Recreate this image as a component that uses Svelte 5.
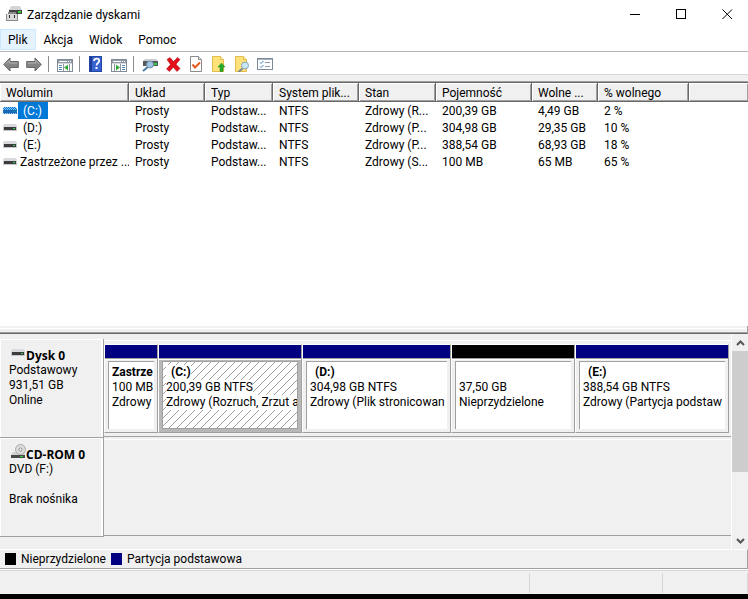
<script>
  // Disk management console: volume list on top, graphical disk map below.

  const menus = ["Plik", "Akcja", "Widok", "Pomoc"];
  let activeMenu = $state("Plik");

  // null is a separator
  const tools = [
    ["back", "Wstecz"], ["forward", "Dalej"], null,
    ["tree", "Pokaż drzewo konsoli"], null,
    ["help", "Pomoc"], ["pane", "Pokaż okienko akcji"], null,
    ["rescan", "Skanuj dyski"], ["remove", "Usuń"], ["props", "Właściwości"],
    ["upload", "Otwórz"], ["search", "Eksploruj"], ["tasks", "Zadania"],
  ];

  const columns = [
    { label: "Wolumin", width: 129 },
    { label: "Układ", width: 76 },
    { label: "Typ", width: 68 },
    { label: "System plik...", width: 86 },
    { label: "Stan", width: 77 },
    { label: "Pojemność", width: 96 },
    { label: "Wolne ...", width: 66 },
    { label: "% wolnego", width: 91 },
  ];

  const volumes = [
    { name: "(C:)", cells: ["Prosty", "Podstaw...", "NTFS", "Zdrowy (R...", "200,39 GB", "4,49 GB", "2 %"] },
    { name: "(D:)", cells: ["Prosty", "Podstaw...", "NTFS", "Zdrowy (P...", "304,98 GB", "29,35 GB", "10 %"] },
    { name: "(E:)", cells: ["Prosty", "Podstaw...", "NTFS", "Zdrowy (P...", "388,54 GB", "68,93 GB", "18 %"] },
    { name: "Zastrzeżone przez ...", cells: ["Prosty", "Podstaw...", "NTFS", "Zdrowy (S...", "100 MB", "65 MB", "65 %"] },
  ];

  const partitions = [
    { name: "Zastrze", size: "100 MB", status: "Zdrowy", share: 54 },
    { name: "(C:)", size: "200,39 GB NTFS", status: "Zdrowy (Rozruch, Zrzut a", share: 144 },
    { name: "(D:)", size: "304,98 GB NTFS", status: "Zdrowy (Plik stronicowan", share: 149 },
    { name: "", size: "37,50 GB", status: "Nieprzydzielone", share: 124, free: true },
    { name: "(E:)", size: "388,54 GB NTFS", status: "Zdrowy (Partycja podstaw", share: 154 },
  ];

  let selected = $state("(C:)");
  let tracks = $derived(partitions.map((p) => `minmax(0, ${p.share}fr)`).join(" "));
  const isLetter = (name) => name.startsWith("(");
</script>

{#snippet drive(picked)}
  <svg class="drive" width="14" height="8" viewBox="0 0 14 8" shape-rendering="crispEdges" aria-hidden="true">
    <path d="M1 0h12v1h1v2H0V1h1z" fill={picked ? "#8ec3ee" : "#d9dadd"} />
    <rect y="3" width="14" height="4" fill={picked ? "#1a73c4" : "#c6c8cc"} />
    <rect x="1" y="3" width="12" height="3" fill={picked ? "#1668b4" : "#3a3c3f"} />
    <rect x="10" y="4" width="2" height="1" fill={picked ? "#149a8c" : "#2fd03a"} />
    {#if picked}
      <path d="M1 .5h1M3 .5h1M5 .5h1M7 .5h1M9 .5h1M11 .5h1M0 1.500h1M2 1.500h1M4 1.500h1M6 1.500h1M8 1.500h1M10 1.500h1M12 1.500h1M1 2.500h1M3 2.500h1M5 2.500h1M7 2.500h1M9 2.500h1M11 2.500h1M13 2.500h1" stroke="#0078d7" />
      <path d="M0 6.500h1M2 6.500h1M4 6.500h1M6 6.500h1M8 6.500h1M10 6.500h1M12 6.500h1" stroke="#a9d0f0" />
    {/if}
  </svg>
{/snippet}

{#snippet toolIcon(name)}
  <svg width="16" height="16" viewBox="0 0 16 16" aria-hidden="true">
    {#if name === "back" || name === "forward"}
      <g transform={name === "forward" ? "translate(16 0) scale(-1 1)" : undefined}>
        <path d="M.7 8.500 7 2v3.500h8.300v6H7V15z" fill="#858585" stroke="#666" />
        <path d="M2.500 8.300 6.200 4.500v2.500h8" fill="none" stroke="#b5b5b5" />
      </g>
    {:else if name === "tree" || name === "pane"}
      <rect x=".5" y="3.500" width="15" height="12" fill="#fff" stroke="#838b94" />
      <path d="M1 4h14v3H1z" fill="#8d98a5" />
      <path d="M2 5.500h8M11 5.500h1M13 5.500h1" stroke="#fff" />
      <path d="M1 7.500h14" stroke="#d4d8dc" />
      {#if name === "tree"}
        <path d="M6.500 8v7M12.500 8v7" stroke="#8d98a5" />
        <path d="M2 9.500h3M2 11.500h3M2 13.500h3" stroke="#5687b8" />
        <path d="M11 8.500v6l-4-3z" fill="#35a83a" />
      {:else}
        <path d="M3.500 8v7M9.500 8v7" stroke="#8d98a5" />
        <path d="M11 9.500h3M11 11.500h3M11 13.500h3" stroke="#5687b8" />
        <path d="M5 8.500v6l4-3z" fill="#35a83a" />
      {/if}
    {:else if name === "help"}
      <rect x="1.500" y=".5" width="12" height="15" fill="#3563d0" stroke="#2445a0" />
      <path d="M2 1h2v14H2z" fill="#1d3b98" />
      <path d="M6 5c0-3.200 5.200-3.200 5.200-.3C11.200 7 8.600 6.800 8.600 9.500" fill="none" stroke="#fff" stroke-width="1.800" />
      <rect x="7.500" y="11" width="2" height="2" fill="#fff" />
    {:else if name === "rescan"}
      <path d="M3 3h11l2 2H1z" fill="#c9ccd0" />
      <path d="M1 5h15v5H1z" fill="#55595d" />
      <rect x="12" y="7" width="3" height="2" fill="#2fd03a" />
      <path d="M6.500 10.500 1 15" stroke="#4a7ba8" stroke-width="2" />
      <circle cx="8" cy="8.500" r="3.500" fill="#9cc5e3" stroke="#718da5" />
    {:else if name === "remove"}
      <path d="m2 3.500 3-2 3.500 4 4-4 2.500 2-4 4.700 4 4.300-3 3-3.700-4.300L4.500 15.500 1.500 13l4-4.500z" fill="#e3101c" stroke="#a8000c" stroke-width=".5" />
    {:else if name === "props"}
      <path d="M2.500.5h8l3 3v12h-11z" fill="#fff" stroke="#8b8b8b" />
      <path d="M10.500.5v3h3" fill="#e4e4e4" stroke="#8b8b8b" />
      <path d="m4.500 8.500 2.500 3 5-5" fill="none" stroke="#e85a1c" stroke-width="2" />
    {:else if name === "upload" || name === "search"}
      <path d="M1.500.5h8l3 3v12h-11z" fill="#ffe27a" stroke="#e3bd4c" />
      <path d="M9.500.5v3h3" fill="#fff6d0" stroke="#e3bd4c" />
      {#if name === "upload"}
        <path d="m10.500 7 3.500 4h-2v4.500H9V11H7z" fill="#27ac2c" stroke="#158a1c" stroke-width=".5" />
      {:else}
        <path d="M8.500 12.500 4.500 16" stroke="#7c8790" stroke-width="2" />
        <circle cx="11" cy="9.500" r="3.500" fill="#c9e6f5" stroke="#87a4b6" />
      {/if}
    {:else}
      <rect x=".5" y="2.500" width="15" height="11" fill="#fff" stroke="#7c8a99" />
      <path d="M1 3.500h14" stroke="#a5b0bc" />
      <path d="m3 6.500 1 1L6.500 5M3 10.500l1 1L6.500 9" fill="none" stroke="#3281ca" />
      <path d="M8 6.500h5M8 10.500h5" stroke="#8b98a7" />
    {/if}
  </svg>
{/snippet}

{#snippet chevron(d)}
  <svg width="9" height="6" viewBox="0 0 9 6" aria-hidden="true"><path {d} fill="none" stroke="#555" stroke-width="2" /></svg>
{/snippet}

<div class="window">
  <header class="titlebar">
    <svg width="16" height="16" viewBox="0 0 16 16" shape-rendering="crispEdges" aria-hidden="true">
      <path d="M5 0h9l2 4H3z" fill="#d3d5d8" />
      <path d="M3 4h13v4H3z" fill="#444" />
      <rect x="12" y="5" width="3" height="2" fill="#2fd03a" />
      <path d="M2 6h8v2h2v7H0V8h2z" fill="#8a8a8a" />
      <path d="M1 8h10v6H1z" fill="#dadada" />
      <path d="M3 9h1v3H3zM8 9h1v3H8z" fill="#333" />
    </svg>
    <h1>Zarządzanie dyskami</h1>
    <div class="caption">
      <button aria-label="Minimalizuj"><svg width="11" height="11" viewBox="0 0 11 11"><path d="M0 5.500h10" stroke="#000" /></svg></button>
      <button aria-label="Maksymalizuj"><svg width="11" height="11" viewBox="0 0 11 11"><rect x=".5" y=".5" width="9" height="9" fill="none" stroke="#000" /></svg></button>
      <button aria-label="Zamknij"><svg width="11" height="11" viewBox="0 0 11 11"><path d="m.5.5 9.500 9.500M10 .5.5 10" stroke="#000" /></svg></button>
    </div>
  </header>

  <nav class="menubar">
    {#each menus as m}
      <button class:active={activeMenu === m} onclick={() => { activeMenu = m; }}>{m}</button>
    {/each}
  </nav>

  <div class="toolbar" role="toolbar" aria-label="Narzędzia">
    {#each tools as tool}
      {#if tool}
        <button aria-label={tool[1]}>{@render toolIcon(tool[0])}</button>
      {:else}
        <span class="sep"></span>
      {/if}
    {/each}
  </div>

  <section class="volumes">
    <table>
      <colgroup>
        {#each columns as c}<col style="width:{c.width}px" />{/each}
        <col />
      </colgroup>
      <thead>
        <tr>
          {#each columns as c}<th scope="col">{c.label}</th>{/each}
          <td class="filler"></td>
        </tr>
      </thead>
      <tbody>
        {#each volumes as v}
          <tr onclick={() => { selected = v.name; }}>
            <td class="volume">
              {@render drive(selected === v.name)}
              <span class="name" class:letter={isLetter(v.name)} class:picked={selected === v.name}>{v.name}</span>
            </td>
            {#each v.cells as cell}<td>{cell}</td>{/each}
            <td></td>
          </tr>
        {/each}
      </tbody>
    </table>
  </section>

  <div class="splitter"></div>

  <section class="map">
    <div class="disks">
      <div class="disk">
        <div class="info">
          <h2>{@render drive(false)}Dysk 0</h2>
          <p>Podstawowy</p>
          <p>931,51 GB</p>
          <p>Online</p>
        </div>
        <div class="lane">
          <div class="parts" style="grid-template-columns:{tracks}">
            {#each partitions as p}
              <button class="part" class:free={p.free} class:current={p.name === selected} onclick={() => { selected = p.name; }}>
                <span class="bar"></span>
                <span class="body">
                  <span class="box">
                    {#if p.name === selected}
                      <svg class="hatch" width="100%" height="100%" shape-rendering="crispEdges" aria-hidden="true">
                        <defs>
                          <pattern id="hatch" width="8" height="8" patternUnits="userSpaceOnUse">
                            <path d="M0 7h1v1H0zM1 6h1v1H1zM2 5h1v1H2zM3 4h1v1H3zM4 3h1v1H4zM5 2h1v1H5zM6 1h1v1H6zM7 0h1v1H7z" fill="#a0a0a0" />
                          </pattern>
                        </defs>
                        <rect width="100%" height="100%" fill="url(#hatch)" />
                      </svg>
                    {/if}
                    <b class:letter={isLetter(p.name)}>{p.name}</b>
                    <span>{p.size}</span>
                    <span>{p.status}</span>
                  </span>
                </span>
              </button>
            {/each}
          </div>
        </div>
      </div>

      <div class="disk">
        <div class="info">
          <h2>
            <svg class="cd" width="15" height="15" viewBox="0 0 15 15" aria-hidden="true">
              <path d="M2 8h11l1 3H0z" fill="#d0d2d5" />
              <circle cx="9.500" cy="5.500" r="5" fill="#dcdcdc" stroke="#aaa" />
              <circle cx="9.500" cy="5.500" r="1.500" fill="#fff" stroke="#888" />
              <path d="M0 11h14v3H0z" fill="#484a4d" />
              <path d="M9 12h3v1H9z" fill="#2fd03a" />
            </svg>CD-ROM 0
          </h2>
          <p>DVD (F:)</p>
          <p>&nbsp;</p>
          <p>Brak nośnika</p>
        </div>
        <div class="lane"></div>
      </div>
    </div>

    <div class="scrollbar">
      <button aria-label="W górę">{@render chevron("M1 5l3.500-3.500L8 5")}</button>
      <div class="track"><div class="thumb"></div></div>
      <button aria-label="W dół">{@render chevron("M1 1l3.500 3.500L8 1")}</button>
    </div>
  </section>

  <div class="legend">
    <span class="swatch free"></span>Nieprzydzielone
    <span class="swatch"></span>Partycja podstawowa
  </div>

  <footer class="status"><span></span><span></span><span></span></footer>
</div>

<style>
  :global(body) { margin: 0; background: #000; }
  .window {
    box-sizing: border-box; min-height: 100vh; display: flex; flex-direction: column;
    border-bottom: 5px solid #000; background: #f0f0f0; color: #000;
    font: 12px/15px Roboto, "Open Sans", sans-serif; cursor: default;
  }
  button { margin: 0; padding: 0; border: 0; background: none; color: inherit; font: inherit; }
  h1, h2, p { margin: 0; font: inherit; }
  svg { display: block; flex: none; }

  .titlebar { display: flex; align-items: center; height: 28px; padding-left: 6px; background: #fff; }
  .titlebar h1 { flex: 1; margin-left: 5px; padding-top: 2px; }
  .caption { display: flex; gap: 4px; align-self: stretch; }
  .caption button { width: 42px; display: flex; align-items: center; justify-content: center; }

  .menubar { display: flex; padding: 1px 0; background: #fff; border-bottom: 1px solid #b4b4b9; }
  .menubar button { padding: 3px 7px 1px; border: 1px solid transparent; }
  .menubar button:hover, .menubar .active { background: #e5f3ff; border-color: #cce8ff; }

  .toolbar { display: flex; padding: 4px 0 2px; background: #fff; border-bottom: 1px solid #d7d7d7; }
  .toolbar button { padding: 0 4px 0 3px; }
  .sep { box-sizing: border-box; width: 8px; padding-left: 2px; }
  .sep::before { content: ""; display: block; width: 1px; height: 16px; background: #8d8d8d; }

  .volumes { flex: 1; margin-top: 6px; border-top: 1px solid #a0a0a0; background: #fff; }
  table { width: 100%; table-layout: fixed; border-collapse: separate; border-spacing: 0; border-top: 1px solid #696969; }
  th, td { box-sizing: border-box; padding: 2px 0 0 6px; text-align: left; font-weight: 400; white-space: nowrap; overflow: hidden; }
  th, .filler {
    height: 19px; background: #f0f0f0; border-bottom: 1px solid #696969;
    box-shadow: inset 1px 1px #fff, inset -1px -1px #a0a0a0;
  }
  th { border-right: 1px solid #696969; }
  tbody td { height: 17px; }
  tbody .volume { display: flex; align-items: center; padding: 0 0 0 3px; }
  .name { margin-left: 1px; padding: 2px 2px 0; }
  .name.letter { padding: 2px 6px 0 5px; }
  .name.picked { background: #0078d7; color: #fff; }

  .splitter {
    box-sizing: border-box; height: 8px; border: solid #a0a0a0; border-width: 0 1px 1px 0;
    border-bottom-color: #696969; box-shadow: inset 0 -1px #a0a0a0, inset 0 2px #f0f0f0, inset 0 3px #fff;
  }

  .map { display: flex; }
  .disks { flex: 1; min-width: 0; padding: 5px 0 12px; }
  .disk { display: flex; height: 99px; }
  .info {
    box-sizing: border-box; width: 104px; flex: none; padding: 8px 0 0 9px;
    border-right: 1px solid #a0a0a0; border-bottom: 1px solid #a0a0a0;
    box-shadow: inset 1px 1px #fff, inset -2px 0 #fff;
  }
  .info h2 { display: flex; align-items: center; height: 16px; font-family: "Open Sans", sans-serif; font-weight: 700; }
  .info .drive { margin: 0 1px 4px 2px; }
  .cd { margin: -6px 0 0 2px; }
  .lane { flex: 1; min-width: 0; padding: 5px 2px 3px 0; margin-bottom: 1px; border-bottom: 1px solid #a0a0a0; box-shadow: inset 0 1px #f0f0f0, inset 0 2px #fff; }
  .parts { display: grid; }
  .part {
    display: flex; flex-direction: column; min-width: 0; text-align: left;
    border: 1px solid #a0a0a0; border-top-color: #fff; border-left-color: #fff;
  }
  .bar { align-self: stretch; height: 13px; background: #000080; border-bottom: 1px solid #a0a0a0; }
  .free .bar { background: #000; }
  .body { align-self: stretch; padding: 1px 3px 3px; border-top: 1px solid #fff; }
  .current .body { background: #b8b8b8; }
  .box {
    position: relative; box-sizing: border-box; display: flex; flex-direction: column; align-items: flex-start;
    height: 68px; padding: 3px; overflow: hidden; background: #fff;
    border-left: 1px solid #a0a0a0; border-top: 1px solid #a0a0a0; white-space: nowrap;
  }
  .current .box { border: 1px solid #a0a0a0; }
  .hatch { position: absolute; inset: 0; }
  .box b, .box span { position: relative; min-height: 15px; background: #fff; }
  .box b.letter { padding-left: 5px; }

  .scrollbar { width: 16px; display: flex; flex-direction: column; border-left: 1px solid #fff; }
  .scrollbar button { height: 17px; display: flex; align-items: center; justify-content: center; }
  .track { flex: 1; }
  .thumb { height: 67%; background: #cdcdcd; }

  .legend {
    display: flex; align-items: center; gap: 5px; height: 18px; padding-left: 5px;
    border: solid #a0a0a0; border-width: 1px 1px 1px 0; border-top-color: #fff;
  }
  .swatch { width: 11px; height: 12px; background: #000080; }
  .swatch.free { background: #000; }

  .status {
    display: grid; grid-template-columns: minmax(0, 1fr) 133px 85px; height: 20px; padding: 3px 0 1px;
    border-top: 1px solid #fff; box-shadow: inset 0 1px #d7d7d7;
  }
  .status span { border-right: 1px solid #d7d7d7; }
</style>
